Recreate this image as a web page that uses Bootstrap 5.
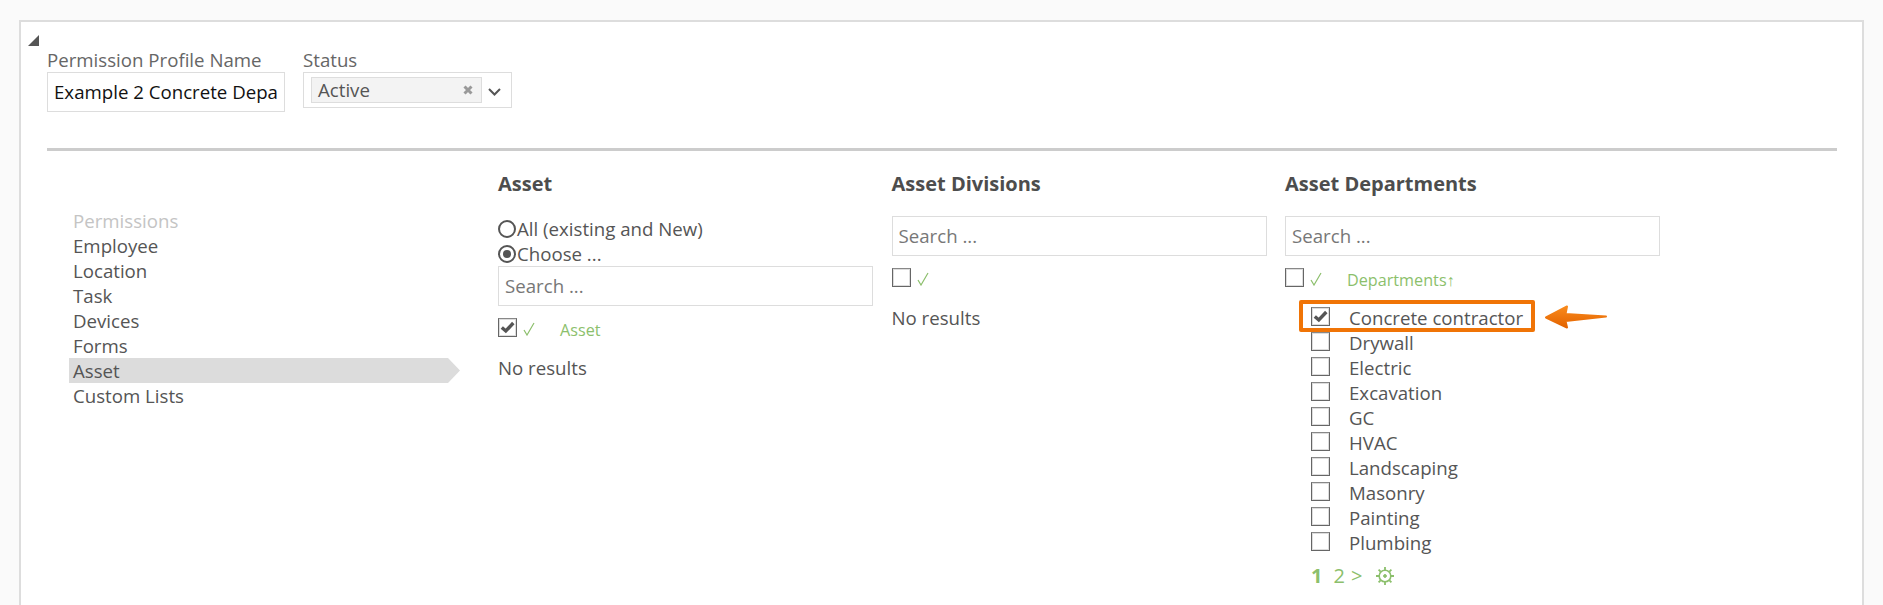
<!DOCTYPE html>
<html lang="en">
<head>
<meta charset="utf-8">
<title>Permission Profile</title>
<link rel="stylesheet" href="https://cdn.jsdelivr.net/npm/bootstrap@5.3.0/dist/css/bootstrap.min.css">
<style>
html, body { height: 605px; overflow: hidden; }
body { background: #fafafa; font-family: "Open Sans", sans-serif; font-size: 18.67px; line-height: 25px; color: #555; padding: 20px 19px 0; }
.sheet { background: #fff; border: 2px solid #ddd; border-bottom: 0; height: 585px; padding: 0 26px; position: relative; }
.corner { position: absolute; left: 7px; top: 13px; width: 0; height: 0; border-left: 11px solid transparent; border-bottom: 11px solid #555; }
.head-row { padding-top: 26px; gap: 18px; height: 126px; }
.field-label { color: #666; font-size: 18.67px; line-height: 24px; }
.name-input { display: block; width: 238px; height: 40px; border: 1px solid #ddd; padding: 0 6px 2px; color: #111; font-size: 18.67px; background: #fff; outline: 0; }
.status-box { width: 209px; height: 36px; border: 1px solid #ddd; padding: 4px 0 0 7px; }
.status-chip { width: 171px; height: 26px; background: #f3f3f3; border: 1px solid #ddd; padding: 0 8px 0 6px; line-height: 23px; font-size: 18.67px; }
.chip-text { margin-top: -2px; }
.chip-x { display: block; }
.chip-arrow { margin-left: 6px; margin-top: 11px; }
.rule { height: 3px; background: #ccc; width: 1790px; }
.side-col { width: 451px; padding-top: 57px; flex: none; }
.side-col > div { padding-left: 26px; height: 25px; white-space: nowrap; }
.side-col .side-title { color: #c4c4c4; }
.side-col .side-on { margin-left: 22px; padding-left: 4px; width: 391px; background: #dcdcdc; clip-path: polygon(0 0, 379px 0, 391px 50%, 379px 100%, 0 100%); }
.pick-col { width: 375px; margin-right: 18.5px; flex: none; }
.pick-title { font-weight: 700; font-size: 20px; line-height: 25px; margin: 20px 0 20px; color: #4d4d4d; }
.pick-search { display: block; width: 375px; height: 40px; border: 1px solid #ddd; padding: 0 6px 2px; font-size: 18.67px; color: #666; outline: 0; background: #fff; }
.pick-search::placeholder { color: #777; opacity: 1; }
.radio-line { height: 25px; display: flex; align-items: center; }
.radio-mark { width: 18px; height: 18px; border: 2px solid #555; border-radius: 50%; flex: none; display: flex; align-items: center; justify-content: center; margin-right: 1px; }
.radio-mark i { width: 8px; height: 8px; background: #555; border-radius: 50%; }
.tick-box { width: 19px; height: 19px; border: 1px solid #666; border-top-color: #888; flex: none; display: block; background: #fff; box-shadow: inset 0 0 0 1px #ddd; }
.tick-box svg { display: block; width: 17px; height: 17px; }
.head-line { height: 19px; margin-top: 12px; display: flex; align-items: center; color: #8cbf6c; font-size: 16.2px; }
.tick-all { width: 43px; padding-left: 6px; flex: none; height: 19px; }
.tick-all svg { display: block; margin-top: 4px; }
.head-text { padding-top: 5px; line-height: 19px; white-space: nowrap; }
.none-text { margin-top: 17.5px; }
.dept-list { padding-left: 26px; margin-top: 19px; }
.dept-row { height: 25px; display: flex; align-items: flex-start; position: relative; }
.dept-row .tick-box { margin-top: 1px; }
.dept-name { margin-left: 19px; margin-top: -1px; white-space: nowrap; }
.mark-box { position: absolute; left: -12px; top: -6px; width: 236px; height: 32px; border: 4px solid #f07406; border-radius: 2px; }
.mark-arrow { position: absolute; left: 234px; top: -2px; width: 62px; height: 26px; }
.pager { display: flex; align-items: center; padding-left: 26px; height: 25px; margin-top: 7px; color: #8cbf6c; font-size: 20px; }
.pager-two { margin-left: 11px; }
.pager-next { margin-left: 6px; }
.pager svg { margin-left: 13px; }
</style>
</head>
<body>
<div class="sheet">
  <span class="corner"></span>
  <div class="d-flex head-row">
    <div>
      <div class="field-label">Permission Profile Name</div>
      <input class="name-input" type="text" value="Example 2 Concrete Department">
    </div>
    <div>
      <div class="field-label">Status</div>
      <div class="status-box d-flex align-items-start">
        <div class="status-chip d-flex align-items-center justify-content-between">
          <span class="chip-text">Active</span>
          <svg class="chip-x" width="10" height="10" viewBox="0 0 10 10"><path d="M1.5 1.5l7 7M8.5 1.5l-7 7" stroke="#999" stroke-width="3" fill="none"/></svg>
        </div>
        <svg class="chip-arrow" width="13" height="8" viewBox="0 0 13 8"><path d="M1 1l5.5 5.5L12 1" fill="none" stroke="#555" stroke-width="2"/></svg>
      </div>
    </div>
  </div>
  <div class="rule"></div>
  <div class="d-flex">
    <div class="side-col">
      <div class="side-title">Permissions</div>
      <div>Employee</div>
      <div>Location</div>
      <div>Task</div>
      <div>Devices</div>
      <div>Forms</div>
      <div class="side-on">Asset</div>
      <div>Custom Lists</div>
    </div>
    <div class="pick-col">
      <div class="pick-title">Asset</div>
      <div class="radio-line"><span class="radio-mark"></span>All (existing and New)</div>
      <div class="radio-line"><span class="radio-mark"><i></i></span>Choose ...</div>
      <input class="pick-search" type="text" placeholder="Search ...">
      <div class="head-line"><span class="tick-box"><svg viewBox="0 0 17 17"><path d="M2.8 8.5 6.8 12 14.3 4" fill="none" stroke="#555" stroke-width="3.4"/></svg></span><span class="tick-all"><svg width="12" height="14" viewBox="0 0 12 14"><path d="M1 8l3 5L11 1" fill="none" stroke="#8cbf6c" stroke-width="1.2"/></svg></span><span class="head-text">Asset</span></div>
      <div class="none-text">No results</div>
    </div>
    <div class="pick-col">
      <div class="pick-title">Asset Divisions</div>
      <input class="pick-search" type="text" placeholder="Search ...">
      <div class="head-line"><span class="tick-box"></span><span class="tick-all"><svg width="12" height="14" viewBox="0 0 12 14"><path d="M1 8l3 5L11 1" fill="none" stroke="#8cbf6c" stroke-width="1.2"/></svg></span></div>
      <div class="none-text">No results</div>
    </div>
    <div class="pick-col">
      <div class="pick-title">Asset Departments</div>
      <input class="pick-search" type="text" placeholder="Search ...">
      <div class="head-line"><span class="tick-box"></span><span class="tick-all"><svg width="12" height="14" viewBox="0 0 12 14"><path d="M1 8l3 5L11 1" fill="none" stroke="#8cbf6c" stroke-width="1.2"/></svg></span><span class="head-text">Departments↑</span></div>
      <div class="dept-list">
        <div class="dept-row">
          <span class="tick-box"><svg viewBox="0 0 17 17"><path d="M2.8 8.5 6.8 12 14.3 4" fill="none" stroke="#555" stroke-width="3.4"/></svg></span><span class="dept-name">Concrete contractor</span>
          <div class="mark-box"></div>
          <svg class="mark-arrow" viewBox="0 0 62 26"><defs><linearGradient id="arrowFill" x1="0" y1="0" x2="0" y2="1"><stop offset="0" stop-color="#f98a1c"/><stop offset="1" stop-color="#e36300"/></linearGradient></defs><path d="M1 13.5 22 2.5l-1.5 7.5L61 12.5 20.5 17l1.5 6.5z" fill="url(#arrowFill)" stroke="url(#arrowFill)" stroke-width="2" stroke-linejoin="round"/></svg>
        </div>
        <div class="dept-row"><span class="tick-box"></span><span class="dept-name">Drywall</span></div>
        <div class="dept-row"><span class="tick-box"></span><span class="dept-name">Electric</span></div>
        <div class="dept-row"><span class="tick-box"></span><span class="dept-name">Excavation</span></div>
        <div class="dept-row"><span class="tick-box"></span><span class="dept-name">GC</span></div>
        <div class="dept-row"><span class="tick-box"></span><span class="dept-name">HVAC</span></div>
        <div class="dept-row"><span class="tick-box"></span><span class="dept-name">Landscaping</span></div>
        <div class="dept-row"><span class="tick-box"></span><span class="dept-name">Masonry</span></div>
        <div class="dept-row"><span class="tick-box"></span><span class="dept-name">Painting</span></div>
        <div class="dept-row"><span class="tick-box"></span><span class="dept-name">Plumbing</span></div>
      </div>
      <div class="pager">
        <strong>1</strong><span class="pager-two">2</span><span class="pager-next">&gt;</span>
        <svg width="20" height="20" viewBox="0 0 20 20"><g fill="none" stroke="#8cbf6c"><circle cx="10" cy="10" r="5.8" stroke-width="1.6"/><circle cx="10" cy="10" r="1.4" fill="#8cbf6c" stroke-width="1"/><path d="M10 1v3M10 16v3M1 10h3M16 10h3M3.6 3.6l2 2M14.4 14.4l2 2M3.6 16.4l2-2M14.4 5.6l2-2" stroke-width="1.8"/></g></svg>
      </div>
    </div>
  </div>
</div>
<script src="https://cdn.jsdelivr.net/npm/bootstrap@5.3.0/dist/js/bootstrap.bundle.min.js"></script>
</body>
</html>
